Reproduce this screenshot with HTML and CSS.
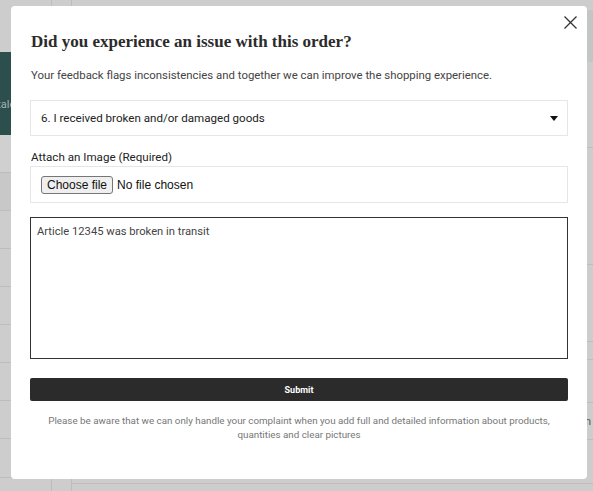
FILE: index.html
```html
<!DOCTYPE html>
<html lang="en">
<head>
<meta charset="utf-8">
<title>Report an issue</title>
<link rel="stylesheet" href="styles.css">
</head>
<body>
<div class="page">
  <aside class="sidebar">
    <div class="sb-top"></div>
    <div class="sb-btn"><span>Catalog</span></div>
    <div class="sb-gap"></div>
    <div class="sb-row dark"></div>
    <div class="sb-row"></div>
    <div class="sb-row"></div>
    <div class="sb-row"></div>
    <div class="sb-row"></div>
    <div class="sb-row"></div>
    <div class="sb-row"></div>
    <div class="sb-row last"></div>
  </aside>
  <div class="gutter"></div>
  <main class="main">
    <div class="m-top"></div>
    <div class="m-head"></div>
    <div class="m-row r1"></div>
    <div class="m-row r2"></div>
    <div class="m-row r3"></div>
    <div class="m-row r4"></div>
    <div class="m-row r5"></div>
    <div class="m-row r6"><span>Open</span></div>
    <div class="m-row r7"></div>
  </main>
</div>

<div class="modal" role="dialog" aria-labelledby="modal-title">
  <button class="close" type="button" aria-label="Close">
    <svg width="13" height="13" viewBox="0 0 13 13"><path d="M0.5 0.5L12.5 12.5M12.5 0.5L0.5 12.5" stroke="#333" stroke-width="1.3" fill="none"/></svg>
  </button>
  <h2 id="modal-title" class="title">Did you experience an issue with this order?</h2>
  <p class="subtitle">Your feedback flags inconsistencies and together we can improve the shopping experience.</p>
  <div class="select-box">
    <select class="select">
      <option>6. I received broken and/or damaged goods</option>
    </select>
    <svg class="caret" width="8" height="5" viewBox="0 0 8 5"><path d="M0 0H8L4 5Z" fill="#111"/></svg>
  </div>
  <span class="label">Attach an Image (Required)</span>
  <div class="file-box">
    <label class="file-label">
      <input class="file" type="file">
      <span class="file-btn">Choose file</span>
      <span class="file-name">No file chosen</span>
    </label>
  </div>
  <textarea class="message">Article 12345 was broken in transit</textarea>
  <button class="submit" type="button">Submit</button>
  <p class="note">Please be aware that we can only handle your complaint when you add full and detailed information about products, quantities and clear pictures</p>
</div>
</body>
</html>
```

FILE: styles.css
```css
* { box-sizing: border-box; }
html, body { margin: 0; padding: 0; }
body {
  width: 593px;
  height: 491px;
  overflow: hidden;
  background: #cdcdcd;
  font-family: Roboto, "Liberation Sans", sans-serif;
}

/* background page (dimmed) */
.page {
  display: flex;
  height: 491px;
}
.sidebar {
  width: 52px;
  border-right: 1px solid #bdbdbd;
  display: flex;
  flex-direction: column;
  overflow: hidden;
}
.sb-top { height: 52px; }
.sb-btn {
  height: 83px;
  background: #2c4e4d;
  display: flex;
  align-items: flex-start;
  padding-top: 47px;
  color: #a3b4b2;
  font-size: 11px;
  line-height: 12px;
}
.sb-btn span { margin-left: -16px; white-space: nowrap; }
.sb-gap { height: 38px; background: #d0d0d0; border-bottom: 1px solid #bdbdbd; }
.sb-row { height: 38px; border-bottom: 1px solid #bdbdbd; }
.sb-row.dark { background: #c8c8c8; }
.sb-row.last { width: 40px; height: 39px; }
.gutter {
  width: 20px;
  border-right: 1px solid #bdbdbd;
}
.main {
  flex: 1;
  display: flex;
  flex-direction: column;
}
.m-top { height: 10px; }
.m-head { height: 52px; background: #c2c6c4; }
.m-row { border-bottom: 1px solid #bdbdbd; }
.m-row.r1 { height: 86px; }
.m-row.r2 { height: 117px; }
.m-row.r3 { height: 77px; }
.m-row.r4 { height: 18px; }
.m-row.r5 { height: 43px; }
.m-row.r6 {
  height: 37px;
  display: flex;
  align-items: center;
  justify-content: flex-end;
  padding-right: 2px;
  font-size: 11px;
  color: #555;
}
.m-row.r7 { height: 44px; }

/* modal */
.modal {
  position: fixed;
  left: 11px;
  top: 6px;
  width: 576px;
  height: 473px;
  background: #fff;
  border-radius: 4px;
  padding: 25px 19px 0 19px;
  display: flex;
  flex-direction: column;
}
.close {
  position: absolute;
  top: 9px;
  right: 9px;
  width: 15px;
  height: 15px;
  padding: 0;
  border: 0;
  background: none;
  display: flex;
  align-items: center;
  justify-content: center;
}
.title {
  margin: 0 0 0 1px;
  font-family: "Liberation Serif", serif;
  font-weight: 700;
  font-size: 17px;
  line-height: 22px;
  color: #2b2b2b;
}
.subtitle {
  margin: 14px 0 0 1px;
  font-size: 11.4px;
  line-height: 16px;
  color: #444;
}
.select-box {
  margin-top: 17px;
  height: 36px;
  border: 1px solid #e6e6e6;
  display: flex;
  align-items: center;
  padding: 0 9px 0 10px;
}
.select {
  flex: 1;
  appearance: none;
  -webkit-appearance: none;
  border: 0;
  background: transparent;
  padding: 0;
  font-family: Roboto, "Liberation Sans", sans-serif;
  font-size: 11.6px;
  color: #222;
  outline: none;
}
.caret { flex: none; }
.label {
  margin: 13px 0 0 1px;
  font-size: 11.6px;
  line-height: 16px;
  color: #222;
}
.file-box {
  margin-top: 1px;
  height: 37px;
  border: 1px solid #e6e6e6;
  display: flex;
  align-items: center;
  padding: 0 10px;
}
.file-label {
  display: flex;
  align-items: center;
  font-family: "Liberation Sans", Arial, sans-serif;
  font-size: 12px;
  color: #111;
}
.file {
  display: none;
}
.file-btn {
  height: 18px;
  padding: 0 5px;
  display: flex;
  align-items: center;
  background: #efefef;
  border: 1px solid #767676;
  border-radius: 3px;
  color: #111;
}
.file-name { margin-left: 4px; }
.message {
  margin-top: 14px;
  height: 142px;
  border: 1px solid #333;
  border-radius: 0;
  padding: 7px 6px;
  resize: none;
  font-family: Roboto, "Liberation Sans", sans-serif;
  font-size: 11.2px;
  line-height: 14px;
  color: #444;
  outline: none;
}
.submit {
  margin-top: 19px;
  height: 23px;
  border: 0;
  border-radius: 2px;
  background: #2b2b2b;
  color: #fff;
  font-family: Roboto, "Liberation Sans", sans-serif;
  font-weight: 700;
  font-size: 9px;
  padding: 0;
}
.note {
  margin: 13px 0 0;
  padding: 0 14px;
  text-align: center;
  font-size: 9.8px;
  line-height: 14px;
  color: #777;
}
```
